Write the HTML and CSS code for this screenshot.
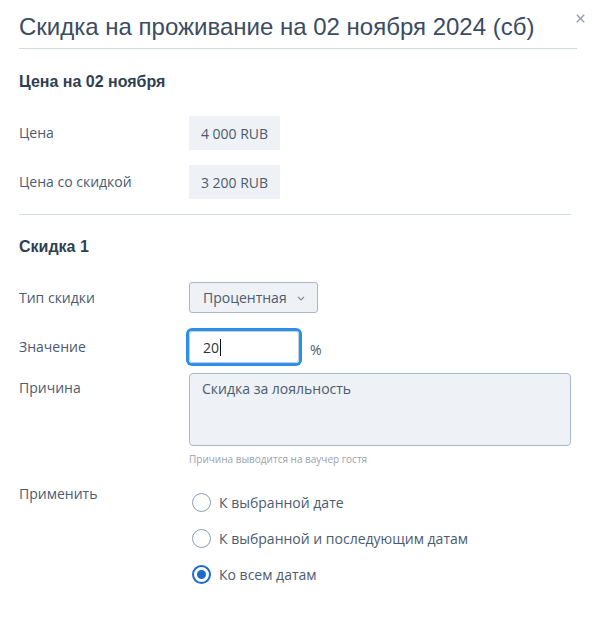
FILE: index.html
```html
<!DOCTYPE html>
<html lang="ru">
<head>
<meta charset="utf-8">
<title>Скидка на проживание</title>
<link rel="stylesheet" href="styles.css">
</head>
<body>
<div class="dialog">
  <div class="header">
    <h1 class="title">Скидка на проживание на 02 ноября 2024 (сб)</h1>
    <button class="close" aria-label="Закрыть">
      <svg width="9" height="9" viewBox="0 0 9 9"><path d="M0.8 0.8 L8.2 8.2 M8.2 0.8 L0.8 8.2" stroke="#8c9db6" stroke-width="1.3" fill="none"/></svg>
    </button>
  </div>
  <div class="content">
    <section class="section">
      <h2 class="section-title">Цена на 02 ноября</h2>
      <div class="rows price-rows">
        <div class="row">
          <div class="label">Цена</div>
          <div class="price">4 000 RUB</div>
        </div>
        <div class="row">
          <div class="label">Цена со скидкой</div>
          <div class="price">3 200 RUB</div>
        </div>
      </div>
    </section>
    <section class="section second">
      <h2 class="section-title">Скидка 1</h2>
      <div class="row row-type">
        <div class="label">Тип скидки</div>
        <div class="select">Процентная
          <svg class="chev" width="8" height="5" viewBox="0 0 8 5"><path d="M1 1 L4 4 L7 1" stroke="#7d8ea6" stroke-width="1.1" fill="none"/></svg>
        </div>
      </div>
      <div class="row row-value">
        <div class="label">Значение</div>
        <div class="input">20<span class="caret"></span></div>
        <div class="unit">%</div>
      </div>
      <div class="row row-reason">
        <div class="label label-top">Причина</div>
        <div class="reason-wrap">
          <div class="textarea">Скидка за лояльность</div>
          <div class="hint">Причина выводится на ваучер гостя</div>
        </div>
      </div>
      <div class="row row-apply">
        <div class="label">Применить</div>
        <div class="radios">
          <label class="radio"><span class="circle"></span>К выбранной дате</label>
          <label class="radio"><span class="circle"></span>К выбранной и последующим датам</label>
          <label class="radio checked"><span class="circle"></span>Ко всем датам</label>
        </div>
      </div>
    </section>
  </div>
</div>
</body>
</html>
```
FILE: styles.css
```css
* { box-sizing: border-box; }
html, body { margin: 0; padding: 0; background: #fff; }
body {
  font-family: "Open Sans", "Liberation Sans", sans-serif;
  font-size: 14px;
  color: #4b5b70;
}
.dialog { position: relative; width: 596px; }
.header {
  margin: 0 19px;
  padding: 12px 0 6px;
  border-bottom: 1px solid #d3d9e2;
}
.title {
  margin: 0;
  font-family: "Liberation Sans", Arial, sans-serif;
  font-weight: normal;
  font-size: 24px;
  line-height: 30px;
  color: #3a4c63;
}
.close {
  position: absolute;
  top: 14px;
  left: 576px;
  padding: 0;
  border: 0;
  background: none;
  line-height: 0;
}
.content { padding: 0 25px 0 19px; }
.section-title {
  margin: 0;
  font-family: "Liberation Sans", Arial, sans-serif;
  font-weight: bold;
  font-size: 16px;
  line-height: 20px;
  color: #2f3f53;
}
.section { padding-top: 23px; }
.section.second {
  margin-top: 15px;
  border-top: 1px solid #d3dbe6;
  padding-top: 22px;
}
.rows { display: flex; flex-direction: column; gap: 15px; }
.price-rows { margin-top: 24px; }
.row { display: flex; align-items: center; }
.label { width: 170px; flex: none; line-height: 20px; }
.price {
  width: 91px;
  height: 34px;
  background: #eef1f5;
  display: flex;
  align-items: center;
  justify-content: center;
}
.row-type { margin-top: 25px; }
.select {
  width: 129px;
  height: 31px;
  background: #eef1f5;
  border: 1px solid #a9b8cd;
  border-radius: 3px;
  display: flex;
  align-items: center;
  padding-left: 13px;
  color: #4b5b70;
}
.chev { margin-left: 10px; margin-top: 1px; }
.row-value { margin-top: 18px; }
.input {
  width: 110px;
  height: 32px;
  border: 1px solid #c4cfdc;
  border-radius: 3px;
  box-shadow: 0 0 0 3px #2d8fe9;
  display: flex;
  align-items: center;
  padding-left: 13px;
  color: #2a3444;
}
.caret {
  display: inline-block;
  width: 1px;
  height: 17px;
  background: #111;
  margin-left: 1px;
}
.unit { margin-left: 11px; margin-top: 4px; }
.row-reason { margin-top: 10px; align-items: flex-start; }
.label-top { padding-top: 5px; }
.reason-wrap { flex: 1; }
.textarea {
  height: 73px;
  background: #eef1f5;
  border: 1px solid #a9b8cd;
  border-radius: 4px;
  padding: 5px 12px;
  line-height: 20px;
  color: #4b5b70;
}
.hint {
  margin-top: 6px;
  font-size: 10px;
  line-height: 14px;
  color: #9aa1ab;
}
.row-apply { margin-top: 18px; align-items: flex-start; }
.radios { display: flex; flex-direction: column; padding-left: 3px; }
.radio {
  display: flex;
  align-items: center;
  height: 36px;
}
.circle {
  width: 19px;
  height: 19px;
  border-radius: 50%;
  border: 1.5px solid #8a9cb6;
  margin-right: 8px;
  flex: none;
  display: flex;
  align-items: center;
  justify-content: center;
  background: #fff;
}
.checked .circle { border: 2px solid #1c6ccc; }
.checked .circle::after {
  content: "";
  width: 9px;
  height: 9px;
  border-radius: 50%;
  background: #1c6ccc;
}
```
